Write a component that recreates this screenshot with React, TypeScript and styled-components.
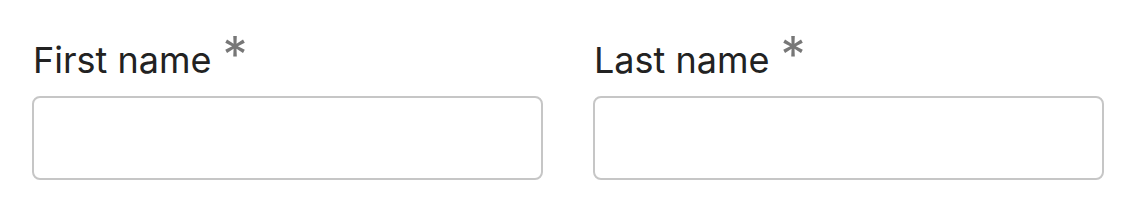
import React from "react";
import styled, { createGlobalStyle } from "styled-components";

const Global = createGlobalStyle`
  html, body { margin: 0; padding: 0; background: #ffffff; }
  body { font-family: Inter, "Noto Sans", sans-serif; }
  * { box-sizing: border-box; }
`;

const Form = styled.div`
  display: grid;
  grid-template-columns: 1fr 1fr;
  column-gap: 50px;
  padding: 36px 32px 0 32px;
`;

const Field = styled.div`
  display: flex;
  flex-direction: column;
  gap: 12px;
`;

const Label = styled.label`
  display: flex;
  align-items: flex-start;
  gap: 11px;
  font-size: 36px;
  line-height: 48px;
  font-weight: 400;
  color: #222222;
  padding-left: 1px;
`;

const Required = styled.span`
  font-size: 50px;
  line-height: 50px;
  margin-top: -6px;
  color: #777777;
`;

const Input = styled.input`
  width: 100%;
  height: 84px;
  border: 2px solid #c6c6c6;
  border-radius: 8px;
  background: #ffffff;
  font-family: inherit;
  font-size: 32px;
  padding: 0 20px;
  outline: none;
`;

export default function App() {
  return (
    <>
      <Global />
      <Form>
        <Field>
          <Label>
            First name <Required>*</Required>
          </Label>
          <Input type="text" aria-label="First name" />
        </Field>
        <Field>
          <Label>
            Last name <Required>*</Required>
          </Label>
          <Input type="text" aria-label="Last name" />
        </Field>
      </Form>
    </>
  );
}
